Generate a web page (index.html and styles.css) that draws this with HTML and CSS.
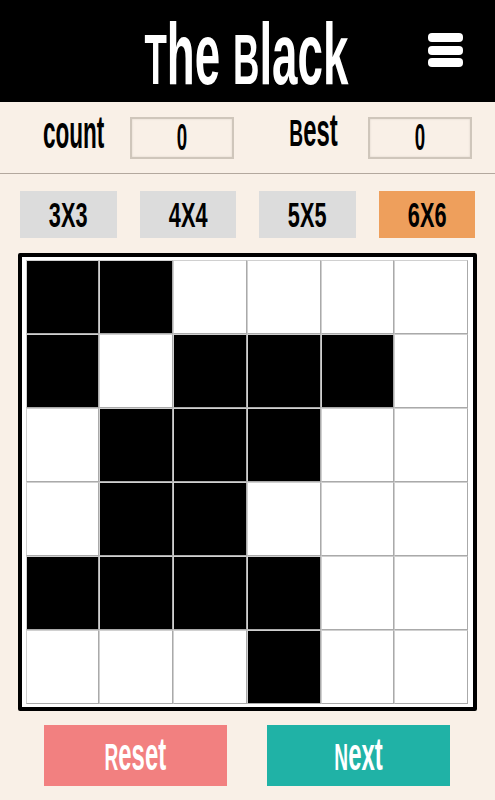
FILE: index.html
```html
<!DOCTYPE html>
<html lang="en">
<head>
    <meta charset="UTF-8">
    <meta name="viewport" content="width=device-width, initial-scale=1.0">
    <title>The Black</title>
    <link rel="stylesheet" href="styles.css">
</head>
<body>
    <header class="top-bar">
        <h1 class="title"><span class="cap">T</span>he <span class="cap">B</span>lack</h1>
        <button class="menu-button" aria-label="Menu">
            <span class="menu-line"></span>
            <span class="menu-line"></span>
            <span class="menu-line"></span>
        </button>
    </header>

    <div class="score-row">
        <div class="score-label score-label-count"><span class="squeeze">count</span></div>
        <div class="score-box"><span class="squeeze">0</span></div>
        <div class="score-label score-label-best"><span class="squeeze"><span class="cap">B</span>est</span></div>
        <div class="score-box"><span class="squeeze">0</span></div>
    </div>

    <div class="size-row">
        <button class="size-button"><span class="squeeze">3X3</span></button>
        <button class="size-button"><span class="squeeze">4X4</span></button>
        <button class="size-button"><span class="squeeze">5X5</span></button>
        <button class="size-button active"><span class="squeeze">6X6</span></button>
    </div>

    <div class="board">
        <div class="cell black"></div><div class="cell black"></div><div class="cell"></div><div class="cell"></div><div class="cell"></div><div class="cell"></div>
        <div class="cell black"></div><div class="cell"></div><div class="cell black"></div><div class="cell black"></div><div class="cell black"></div><div class="cell"></div>
        <div class="cell"></div><div class="cell black"></div><div class="cell black"></div><div class="cell black"></div><div class="cell"></div><div class="cell"></div>
        <div class="cell"></div><div class="cell black"></div><div class="cell black"></div><div class="cell"></div><div class="cell"></div><div class="cell"></div>
        <div class="cell black"></div><div class="cell black"></div><div class="cell black"></div><div class="cell black"></div><div class="cell"></div><div class="cell"></div>
        <div class="cell"></div><div class="cell"></div><div class="cell"></div><div class="cell black"></div><div class="cell"></div><div class="cell"></div>
    </div>

    <div class="action-row">
        <button class="action-button reset"><span class="squeeze"><span class="cap">R</span>eset</span></button>
        <button class="action-button next"><span class="squeeze"><span class="cap">N</span>ext</span></button>
    </div>
</body>
</html>
```
FILE: styles.css
```css
html, body {
    margin: 0;
    padding: 0;
    overflow: hidden;
}
body {
    width: 495px;
    height: 800px;
    background-color: #f9f0e7;
    color: #000;
    font-family: "Liberation Sans", Arial, sans-serif;
    font-weight: bold;
}
button {
    border: none;
    padding: 0;
    font-family: inherit;
    font-weight: inherit;
    color: inherit;
}
.squeeze {
    display: inline-block;
    transform: scaleX(0.52);
}
.cap {
    font-size: 0.8em;
}
.top-bar {
    height: 102px;
    background-color: #000;
    display: flex;
    align-items: center;
    position: relative;
}
.title {
    margin: 0;
    width: 100%;
    box-sizing: border-box;
    padding-right: 4px;
    text-align: center;
    color: #fff;
    font-size: 88px;
    line-height: 108px;
    height: 102px;
    font-weight: bold;
    white-space: nowrap;
    transform: scaleX(0.52);
}
.menu-button {
    position: absolute;
    left: 428px;
    top: 33px;
    width: 35px;
    display: flex;
    flex-direction: column;
    gap: 3.5px;
    background: none;
}
.menu-line {
    height: 9px;
    background-color: #fff;
    border-radius: 4px;
}
.score-row {
    height: 71px;
    border-bottom: 1px solid #b3a89e;
    display: flex;
    align-items: center;
    font-size: 46px;
}
.score-label {
    text-align: center;
    line-height: 42px;
    white-space: nowrap;
    padding-bottom: 12px;
}
.score-label-count {
    width: 130px;
    padding-left: 11px;
    box-sizing: border-box;
}
.score-label-count .squeeze {
    transform: scaleX(0.49);
}
.score-label-best {
    width: 134px;
    padding-left: 26px;
    box-sizing: border-box;
}
.score-box {
    width: 104px;
    height: 42px;
    box-sizing: border-box;
    border: 2px solid #cfc6bb;
    font-size: 36px;
    line-height: 38px;
    text-align: center;
    box-shadow: inset 0 0 2px #d8cfc5;
}
.size-row {
    display: flex;
    gap: 23px;
    padding: 17px 0 0 20px;
}
.size-button {
    width: 96.5px;
    height: 47px;
    background-color: #dcdcdc;
    font-size: 35px;
}
.size-button .squeeze {
    transform: scaleX(0.62);
}
.size-button.active {
    background-color: #ee9f5c;
}
.board {
    width: 459px;
    height: 458px;
    box-sizing: border-box;
    margin: 15px 0 0 18px;
    border: 4px solid #000;
    border-radius: 2px;
    background-color: #fff;
    padding: 3px 0 0 3.5px;
    display: grid;
    grid-template-columns: repeat(6, 73.8px);
    grid-template-rows: repeat(6, 74px);
}
.cell {
    box-sizing: border-box;
    background-color: #fff;
    border: 1px solid #aaa;
    border-top-color: #d0d0d0;
    border-left-color: #d0d0d0;
}
.cell.black {
    background-color: #000;
}
.action-row {
    display: flex;
    gap: 40px;
    padding: 14px 0 0 44px;
}
.action-button {
    width: 183px;
    height: 61px;
    color: #fff;
    font-size: 46px;
    line-height: 48px;
}
.reset {
    background-color: #f28080;
}
.next {
    background-color: #20b2a6;
}
```
